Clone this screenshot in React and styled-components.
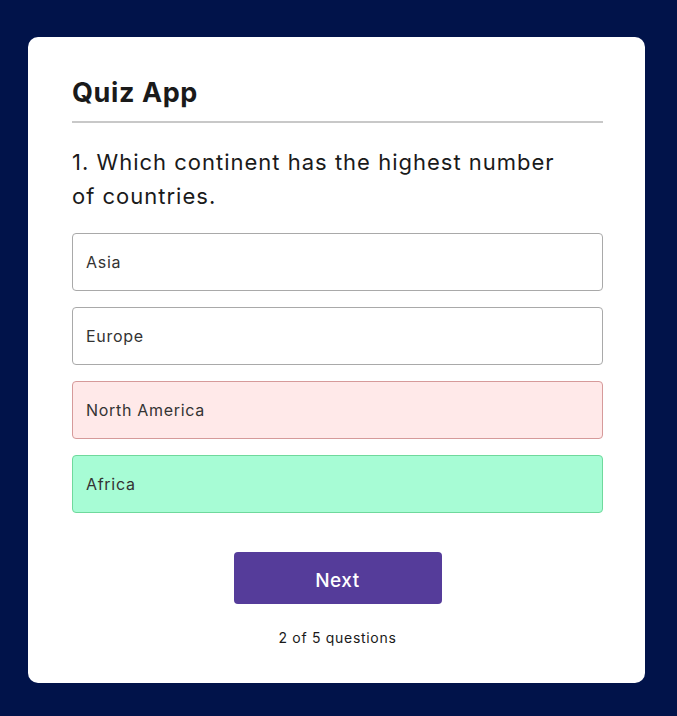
import React from "react";
import styled, { createGlobalStyle } from "styled-components";

const Global = createGlobalStyle`
  html, body { margin: 0; padding: 0; background: #01134a; }
  body { font-family: Inter, "Open Sans", sans-serif; }
  * { box-sizing: border-box; }
`;

const Page = styled.div`
  min-height: 716px;
  padding: 37px 32px 33px 28px;
  display: flex;
  align-items: flex-start;
`;

const Card = styled.div`
  width: 617px;
  height: 646px;
  background: #fff;
  border-radius: 10px;
  padding: 28px 42px 0 44px;
  display: flex;
  flex-direction: column;
`;

const Title = styled.h1`
  margin: 0;
  font-size: 27px;
  font-weight: 700;
  line-height: 56px;
  color: #1a1a1a;
  letter-spacing: 0.6px;
`;

const Rule = styled.hr`
  margin: 0;
  border: none;
  height: 2px;
  background: #c8c8c8;
  margin-bottom: 22px;
`;

const Question = styled.h2`
  margin: 0 0 20px;
  font-size: 22px;
  font-weight: 400;
  line-height: 34px;
  color: #1a1a1a;
  letter-spacing: 1px;
  max-width: 500px;
`;

const Options = styled.ul`
  list-style: none;
  margin: 0;
  padding: 0;
  display: flex;
  flex-direction: column;
  gap: 16px;
`;

const variants = {
  plain: { bg: "#ffffff", border: "#a9a9a9" },
  wrong: { bg: "#ffe9e9", border: "#d69a9a" },
  right: { bg: "#a7fcd5", border: "#6fd99c" },
};

const Option = styled.li`
  height: 58px;
  display: flex;
  align-items: center;
  padding: 0 13px;
  font-size: 16px;
  letter-spacing: 0.7px;
  color: #333;
  border-radius: 4px;
  background: ${(p) => variants[p.$v].bg};
  border: 1px solid ${(p) => variants[p.$v].border};
`;

const Footer = styled.div`
  display: flex;
  flex-direction: column;
  align-items: center;
  margin-top: 39px;
`;

const NextButton = styled.button`
  width: 208px;
  height: 52px;
  border: none;
  border-radius: 4px;
  background: #553c9a;
  color: #fff;
  font-family: inherit;
  font-size: 19px;
  font-weight: 500;
  letter-spacing: 0.5px;
  padding: 4px 0 0;
  cursor: pointer;
`;

const Count = styled.p`
  margin: 25px 0 0;
  font-size: 14px;
  letter-spacing: 0.7px;
  color: #1a1a1a;
`;

export default function App() {
  const opts = [
    ["Asia", "plain"],
    ["Europe", "plain"],
    ["North America", "wrong"],
    ["Africa", "right"],
  ];
  return (
    <>
      <Global />
      <Page>
        <Card>
          <Title>Quiz App</Title>
          <Rule />
          <Question>1. Which continent has the highest number of countries.</Question>
          <Options>
            {opts.map(([t, v]) => (
              <Option key={t} $v={v}>{t}</Option>
            ))}
          </Options>
          <Footer>
            <NextButton>Next</NextButton>
            <Count>2 of 5 questions</Count>
          </Footer>
        </Card>
      </Page>
    </>
  );
}
